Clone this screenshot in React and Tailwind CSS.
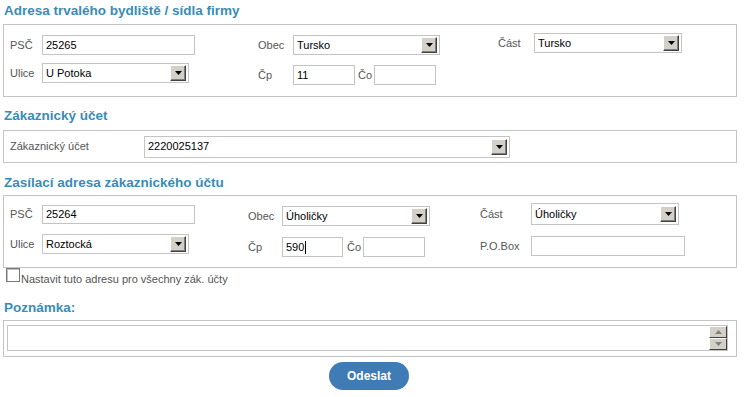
import React from 'react';

const font = { fontFamily: '"Liberation Sans", Arial, sans-serif' };

// classic windows-style dropdown arrow button
function ArrowButton() {
  return (
    <div className="w-[16px] h-[16px] bg-[#d4d0c8] border-t border-l border-t-white border-l-white border-b border-r border-b-[#404040] border-r-[#404040] flex items-center justify-center shadow-[inset_-1px_-1px_0_#808080]">
      <svg width="7" height="4" viewBox="0 0 7 4">
        <path d="M0 0h7L3.5 4z" fill="#000" />
      </svg>
    </div>
  );
}

function Select({ value, w, h = 'h-[20px]' }) {
  return (
    <div className={`${w} ${h} border border-[#c4c4c4] bg-white flex items-center justify-between pl-[3px] pr-[2px]`}>
      <span className="text-[11px] text-black leading-none">{value}</span>
      <ArrowButton />
    </div>
  );
}

function Input({ value, w, h = 'h-[20px]', caret }) {
  return (
    <div className={`${w} ${h} border border-[#c4c4c4] bg-white flex items-center pl-[3px]`}>
      <span className="text-[11px] text-black leading-none">{value}</span>
      {caret && <span className="w-px h-[13px] bg-black ml-px" />}
    </div>
  );
}

function Label({ children, w }) {
  return <span className={`${w} shrink-0 text-[11px] text-[#555] leading-none`}>{children}</span>;
}

function Heading({ children, className }) {
  return (
    <h2 className={`text-[13.5px] font-bold text-[#3a8cb6] leading-none -ml-[3px] pl-[4px] box-content ${className}`}>
      {children}
    </h2>
  );
}

function SpinButton({ up }) {
  return (
    <div className="h-[12px] bg-[#d4d0c8] border-t border-l border-t-white border-l-white border-b border-r border-b-[#404040] border-r-[#404040] flex items-center justify-center">
      <svg width="7" height="4" viewBox="0 0 7 4">
        <path d={up ? 'M0 4h7L3.5 0z' : 'M0 0h7L3.5 4z'} fill="#808080" />
      </svg>
    </div>
  );
}

export default function App() {
  return (
    <div className="w-[746px] h-[397px] bg-white overflow-hidden" style={font}>
      <div className="w-[734px] ml-[3px] pt-[4px]">
        {/* Adresa trvalého bydliště */}
        <Heading className="h-[20px]">Adresa trvalého bydliště / sídla firmy</Heading>
        <div className="h-[73px] border border-[#c4c4c4] flex">
          <div className="w-[254px] pl-[6px] pt-[10px] flex flex-col gap-[8px]">
            <div className="flex items-center">
              <Label w="w-[32px]">PSČ</Label>
              <Input value="25265" w="w-[153px]" />
            </div>
            <div className="flex items-center">
              <Label w="w-[32px]">Ulice</Label>
              <Select value="U Potoka" w="w-[147px]" />
            </div>
          </div>
          <div className="w-[240px] pt-[10px] flex flex-col gap-[10px]">
            <div className="flex items-center">
              <Label w="w-[35px]">Obec</Label>
              <Select value="Tursko" w="w-[147px]" />
            </div>
            <div className="flex items-center">
              <Label w="w-[35px]">Čp</Label>
              <Input value="11" w="w-[62px]" />
              <Label w="w-[19px] pl-[3px]">Čo</Label>
              <Input value="" w="w-[62px]" />
            </div>
          </div>
          <div className="pt-[8px]">
            <div className="flex items-center">
              <Label w="w-[36px]">Část</Label>
              <Select value="Tursko" w="w-[148px]" />
            </div>
          </div>
        </div>

        {/* Zákaznický účet */}
        <Heading className="h-[21px] pt-[12px]">Zákaznický účet</Heading>
        <div className="h-[33px] border border-[#c4c4c4] flex items-center pl-[6px]">
          <Label w="w-[134px]">Zákaznický účet</Label>
          <Select value="2220025137" w="w-[366px]" h="h-[22px]" />
        </div>

        {/* Zasílací adresa */}
        <Heading className="h-[19px] pt-[13px]">Zasílací adresa zákaznického účtu</Heading>
        <div className="h-[73px] border border-[#c4c4c4] flex">
          <div className="w-[244px] pl-[6px] pt-[9px] flex flex-col gap-[10px]">
            <div className="flex items-center">
              <Label w="w-[32px]">PSČ</Label>
              <Input value="25264" w="w-[153px]" h="h-[19px]" />
            </div>
            <div className="flex items-center">
              <Label w="w-[32px]">Ulice</Label>
              <Select value="Roztocká" w="w-[147px]" />
            </div>
          </div>
          <div className="w-[232px] pt-[10px] flex flex-col gap-[11px]">
            <div className="flex items-center">
              <Label w="w-[34px]">Obec</Label>
              <Select value="Úholičky" w="w-[148px]" />
            </div>
            <div className="flex items-center">
              <Label w="w-[34px]">Čp</Label>
              <Input value="590" w="w-[61px]" caret />
              <Label w="w-[20px] pl-[4px]">Čo</Label>
              <Input value="" w="w-[62px]" />
            </div>
          </div>
          <div className="pt-[7px] flex flex-col gap-[11px]">
            <div className="flex items-center">
              <Label w="w-[51px]">Část</Label>
              <Select value="Úholičky" w="w-[148px]" h="h-[22px]" />
            </div>
            <div className="flex items-center">
              <Label w="w-[51px]">P.O.Box</Label>
              <Input value="" w="w-[154px]" />
            </div>
          </div>
        </div>

        {/* checkbox */}
        <div className="h-[20px] flex items-start ml-[3px]">
          <div className="w-[14px] h-[14px] border border-[#7a7a7a] bg-white shadow-[inset_1px_1px_0_#c0c0c0]" />
          <span className="text-[11px] text-[#555] leading-none pt-[6px] pl-px">Nastavit tuto adresu pro všechny zák. účty</span>
        </div>

        {/* Poznámka */}
        <Heading className="h-[19px] pt-[13px]">Poznámka:</Heading>
        <div className="h-[37px] border border-[#c4c4c4] pl-[3px] pr-[8px] pt-[4px]">
          <div className="h-[26px] border border-[#c4c4c4] bg-white flex justify-end">
            <div className="w-[18px] flex flex-col">
              <SpinButton up />
              <SpinButton />
            </div>
          </div>
        </div>

        {/* submit */}
        <div className="flex justify-center pt-[5px] pr-[2px]">
          <button className="w-[80px] h-[28px] rounded-full bg-[#3f7cb6] text-white text-[12px] font-bold" style={font}>
            Odeslat
          </button>
        </div>
      </div>
    </div>
  );
}
